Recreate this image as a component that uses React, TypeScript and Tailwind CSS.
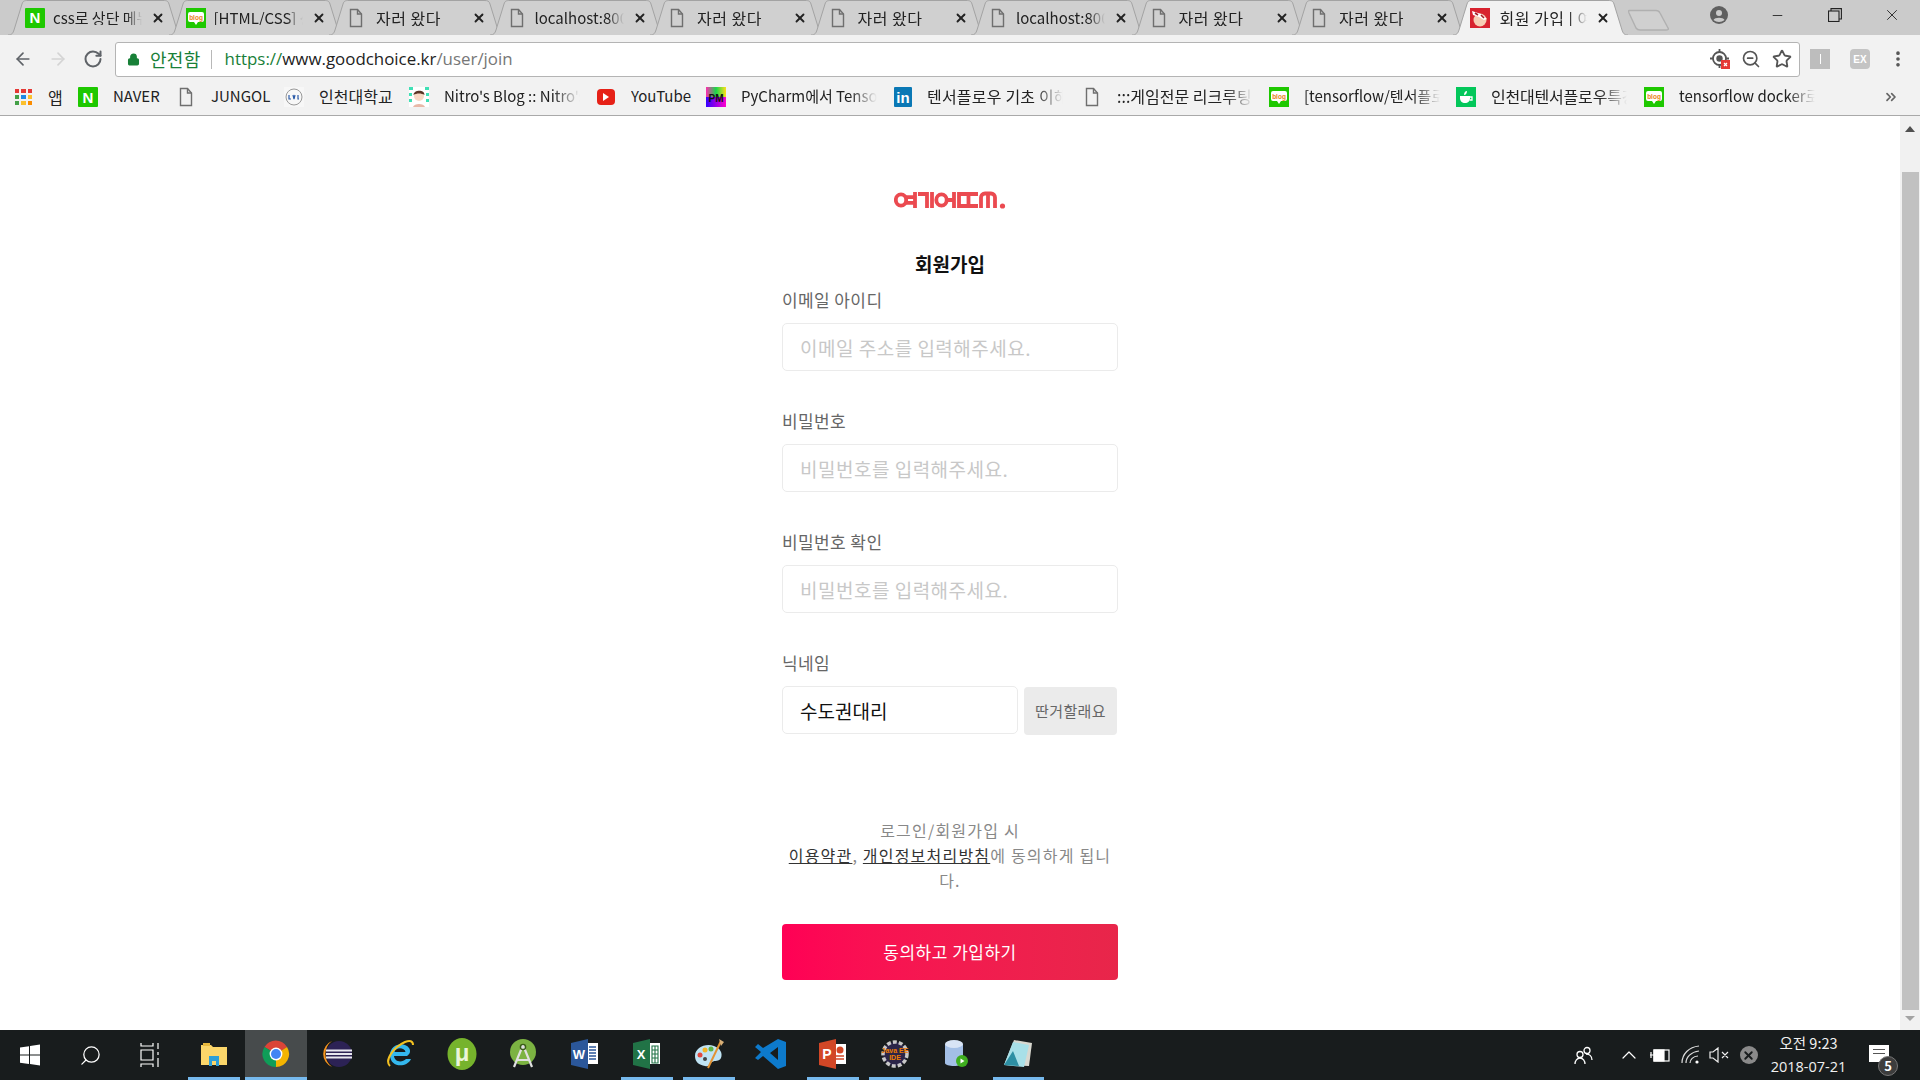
import { ArrowLeft, ArrowRight, RotateCw, Lock, Star, ZoomOut, X, Minus, ChevronUp, MoreVertical, ChevronsRight, Search } from 'lucide-react'

function NaverIcon({ className = 'w-5 h-5' }: { className?: string }) {
  return (
    <div className={`${className} bg-[#1ec800] rounded-[1px] flex items-center justify-center shrink-0 text-white font-black text-[15px] leading-none font-['Liberation_Sans',sans-serif]`}>N</div>
  )
}

function BlogIcon() {
  return (
    <svg viewBox="0 0 20 20" className="w-5 h-5 shrink-0">
      <rect width="20" height="20" fill="#1ec800" />
      <path d="M4 4h12a2 2 0 0 1 2 2v6a2 2 0 0 1-2 2h-4l-2 3-2-3H4a2 2 0 0 1-2-2V6a2 2 0 0 1 2-2z" fill="#fff" />
      <text x="10" y="11.5" textAnchor="middle" fontSize="6.5" fontWeight="700" fill="#e8841a" fontFamily="Liberation Sans">blog</text>
    </svg>
  )
}

function DocIcon() {
  return (
    <svg viewBox="0 0 20 20" className="w-5 h-5 shrink-0" fill="none" stroke="#6f6f6f" strokeWidth="1.4">
      <path d="M4.5 1.5h7l4 4.5v12.5h-11z" />
      <path d="M11.5 1.5V6h4" />
    </svg>
  )
}

function GoodChoiceIcon() {
  return (
    <svg viewBox="0 0 20 20" className="w-5 h-5 shrink-0">
      <rect width="20" height="20" fill="#d8232f" />
      <circle cx="10" cy="12" r="6.5" fill="#f6cdb4" />
      <path d="M2 3l9 3 6 5-3 1-5-3-6-2z" fill="#fff" />
      <path d="M5 5l3 2M11 7l3 3" stroke="#a3202a" strokeWidth="1.6" />
    </svg>
  )
}

const tabs = [
  { label: 'css로 상단 메뉴', icon: <NaverIcon /> },
  { label: '[HTML/CSS] 상단', icon: <BlogIcon /> },
  { label: '자러 왔다', icon: <DocIcon />, kr: true },
  { label: 'localhost:8000', icon: <DocIcon /> },
  { label: '자러 왔다', icon: <DocIcon />, kr: true },
  { label: '자러 왔다', icon: <DocIcon />, kr: true },
  { label: 'localhost:8000', icon: <DocIcon /> },
  { label: '자러 왔다', icon: <DocIcon />, kr: true },
  { label: '자러 왔다', icon: <DocIcon />, kr: true },
  { label: '회원 가입 | 여기어때', icon: <GoodChoiceIcon />, active: true, kr: true },
]

function Tab({ label, icon, active, kr }: { label: string; icon: React.ReactNode; active?: boolean; kr?: boolean }) {
  return (
    <div className={`relative w-[175px] h-[35px] shrink-0 -mr-[14.5px] ${active ? 'z-10' : ''}`}>
      <svg viewBox="0 0 175 35" className="absolute inset-0 w-full h-full">
        <path
          d="M0 35C4 35 5 33 6 30L14 4C15 1 16 .5 20 .5H155C159 .5 160 1 161 4L169 30C170 33 171 35 175 35"
          fill={active ? '#f2f2f2' : '#d0d0d0'}
          stroke="#a3a3a3"
          strokeWidth="1"
        />
      </svg>
      <div className="relative flex items-center h-full pl-[17px]">
        {icon}
        <span
          className={`ml-[8px] w-[89px] overflow-hidden whitespace-nowrap leading-none text-[#222] [mask-image:linear-gradient(to_right,black_82%,transparent)] ${kr ? 'text-[16px] tracking-[0.5px] pl-[2px]' : 'text-[15px]'}`}
        >
          {label}
        </span>
        <X className="w-[14px] h-[14px] ml-[9px] text-[#222]" strokeWidth={3.2} />
      </div>
    </div>
  )
}

function TabStrip() {
  return (
    <div className="h-[35px] bg-[#cbcbcb] flex items-start pl-2 shrink-0 border-b border-[#a3a3a3] box-content -mb-px">
      {tabs.map((t, i) => (
        <Tab key={i} label={t.label} icon={t.icon} active={t.active} kr={t.kr} />
      ))}
      <svg viewBox="0 0 42 22" className="w-[42px] h-[22px] mt-[9px] ml-[14.5px] shrink-0">
        <path d="M1 1.5H28C30 1.5 31 2 32 4L40 19C41 20.5 40 21 38 21H12C10 21 9 20.5 8 19L1 4C.5 2.5.5 1.5 1 1.5z" fill="#d0d0d0" stroke="#b0b0b0" strokeWidth="1.4" />
      </svg>
      <div className="ml-auto flex items-center h-[30px] text-[#222]">
        <div className="w-[42px] flex justify-center mr-[9px]">
          <svg viewBox="0 0 18 18" className="w-[18px] h-[18px]">
            <circle cx="9" cy="9" r="9" fill="#5f5f5f" />
            <circle cx="9" cy="7" r="3" fill="#cbcbcb" />
            <path d="M3.500 14c1-3 10-3 11 0-3 2.500-8 2.500-11 0z" fill="#cbcbcb" />
          </svg>
        </div>
        <div className="w-[57px] flex justify-center"><Minus className="w-[15px] h-[15px]" strokeWidth={1.4} /></div>
        <div className="w-[57px] flex justify-center">
          <svg viewBox="0 0 14 14" className="w-[14px] h-[14px]" fill="none" stroke="#222" strokeWidth="1.1">
            <rect x=".5" y="3" width="10.5" height="10.5" />
            <path d="M3 3V.6h10.4V11H11" />
          </svg>
        </div>
        <div className="w-[57px] flex justify-center"><X className="w-[18px] h-[18px]" strokeWidth={1.2} /></div>
      </div>
    </div>
  )
}

function Toolbar() {
  return (
    <div className="h-[48px] bg-[#f2f2f2] flex items-center shrink-0">
      <div className="flex items-center pl-[13px] w-[115px] gap-[15px] shrink-0">
        <ArrowLeft className="w-5 h-5 text-[#5f6368]" strokeWidth={2} />
        <ArrowRight className="w-5 h-5 text-[#d4d4d4]" strokeWidth={2} />
        <RotateCw className="w-5 h-5 text-[#5f6368]" strokeWidth={2.4} />
      </div>
      <div className="w-[1685px] h-[35px] shrink-0 bg-white border border-[#b4b4b4] rounded-[3px] flex items-center pl-[11px] pr-[7px]">
        <Lock className="w-[13px] h-[15px] text-[#188038]" fill="#188038" strokeWidth={2.4} />
        <span className="ml-[10px] text-[18px] tracking-[0.3px] text-[#188038]">안전함</span>
        <div className="w-px h-[19px] bg-[#b8b8b8] ml-[10px]" />
        <div className="ml-[13px] text-[16.9px] leading-none font-['Open_Sans',sans-serif]">
          <span className="text-[#188038]">https://</span>
          <span className="text-[#222]">www.goodchoice.kr</span>
          <span className="text-[#777]">/user/join</span>
        </div>
        <div className="ml-auto flex items-center gap-[11px]">
          <svg viewBox="0 0 20 20" className="w-5 h-5">
            <circle cx="9.5" cy="9.5" r="6.5" fill="none" stroke="#555" strokeWidth="1.8" />
            <circle cx="9.5" cy="9.5" r="3.2" fill="#555" />
            <path d="M9.5 0v3M9.5 16v3M0 9.5h3M16 9.5h3" stroke="#555" strokeWidth="1.8" />
            <rect x="11" y="11" width="9" height="9" fill="#e53935" />
            <path d="M14 14l3 3M17 14l-3 3" stroke="#fff" strokeWidth="1.2" />
          </svg>
          <ZoomOut className="w-[20px] h-[20px] text-[#555]" strokeWidth={2} />
          <Star className="w-[20px] h-[20px] text-[#555]" strokeWidth={2.2} />
        </div>
      </div>
      <div className="w-5 h-5 bg-[#bdbdbd] ml-[10px] flex items-center justify-center shrink-0">
        <div className="w-px h-[10px] bg-white" />
      </div>
      <div className="w-5 h-5 bg-[#c4c4c4] rounded-[4px] ml-[20px] shrink-0 flex items-center justify-center text-white text-[10px] font-bold font-['Liberation_Sans',sans-serif]">EX</div>
      <MoreVertical className="w-5 h-5 ml-[18px] text-[#555] shrink-0" strokeWidth={2.4} />
    </div>
  )
}

function AppsIcon() {
  const colors = ['#e53935', '#e53935', '#e53935', '#43a047', '#1e88e5', '#fbc02d', '#43a047', '#fbc02d', '#fb8c00']
  return (
    <div className="grid grid-cols-3 gap-[2px] w-[17px] h-[17px]">
      {colors.map((c, i) => (
        <div key={i} className="w-[4.3px] h-[4.3px]" style={{ backgroundColor: c }} />
      ))}
    </div>
  )
}

const UniIcon = (
  <svg viewBox="0 0 20 20" className="w-5 h-5 shrink-0">
    <rect width="20" height="20" fill="#f7f7f7" />
    <circle cx="10" cy="10" r="8" fill="none" stroke="#999" />
    <path d="M5 8v4h2M9 8l1 4 1-4M14 8v4h1" fill="none" stroke="#2a5aa8" strokeWidth="1.2" />
  </svg>
)

const NitroIcon = (
  <svg viewBox="0 0 20 20" className="w-5 h-5 shrink-0">
    <rect width="20" height="20" fill="#fff" />
    <path d="M0 0h4v3H0zM16 0h4v3h-4zM0 6h3v3H0zM17 6h3v3h-3zM0 12h3v3H0zM17 12h3v3h-3z" fill="#3fe0b5" />
    <circle cx="10" cy="9" r="5" fill="#f8d8c4" />
    <path d="M4.500 8c0-5 11-6 11 0-3-2-8-2-11 0z" fill="#5b3526" />
    <path d="M4 20c1-4 11-4 12 0z" fill="#e8b8a8" />
  </svg>
)

const YoutubeIcon = (
  <div className="w-5 h-5 flex items-center justify-center shrink-0">
    <div className="w-[18px] h-[16px] bg-[#e62117] rounded-[4px] flex items-center justify-center">
      <div className="w-0 h-0 border-y-[4px] border-y-transparent border-l-[6px] border-l-white" />
    </div>
  </div>
)

const PmIcon = (
  <svg viewBox="0 0 20 20" className="w-5 h-5 shrink-0">
    <defs>
      <linearGradient id="pm" x1="0" y1="0" x2="1" y2="0">
        <stop offset="0" stopColor="#ff2bb0" />
        <stop offset=".5" stopColor="#19d64b" />
        <stop offset="1" stopColor="#ffe01a" />
      </linearGradient>
      <linearGradient id="pm2" x1="0" y1="0" x2="1" y2="0">
        <stop offset="0" stopColor="#30f" />
        <stop offset="1" stopColor="#f0c" />
      </linearGradient>
    </defs>
    <rect width="20" height="10" fill="url(#pm)" />
    <rect y="10" width="20" height="10" fill="url(#pm2)" />
    <text x="10" y="14.500" textAnchor="middle" fontSize="10" fontWeight="700" fill="#111" fontFamily="Liberation Sans">PM</text>
  </svg>
)

const LinkedinIcon = (
  <div className="w-[18px] h-5 bg-[#0a78b5] rounded-[1px] flex items-center justify-center text-white font-bold text-[15px] leading-none shrink-0 font-['Liberation_Sans',sans-serif]">in</div>
)

const CupIcon = (
  <svg viewBox="0 0 20 20" className="w-5 h-5 shrink-0">
    <rect width="20" height="20" fill="#03c75a" />
    <path d="M4 9h10v2c0 3-2 5-5 5s-5-2-5-5z" fill="#fff" />
    <path d="M14 10h2v3h-2.500" fill="none" stroke="#fff" strokeWidth="1.3" />
    <path d="M8 8c0-2 1-4 3-4 0 2-1 4-3 4z" fill="#fff" />
  </svg>
)

const bookmarks = [
  { icon: <NaverIcon />, label: 'NAVER', w: 'w-[98px]', tw: 'w-[60px]' },
  { icon: <DocIcon />, label: 'JUNGOL', w: 'w-[108px]', tw: 'w-[70px]' },
  { icon: UniIcon, label: '인천대학교', w: 'w-[125px]', tw: 'w-[85px] text-[16px] -translate-y-px' },
  { icon: NitroIcon, label: "Nitro's Blog :: Nitro's", w: 'w-[187px]', tw: 'w-[136px]', fade: true },
  { icon: YoutubeIcon, label: 'YouTube', w: 'w-[110px]', tw: 'w-[75px]' },
  { icon: PmIcon, label: 'PyCharm에서 Tensorflow', w: 'w-[188px]', tw: 'w-[136px]', fade: true },
  { icon: LinkedinIcon, label: '텐서플로우 기초 이해하기', w: 'w-[188px]', tw: 'w-[136px] text-[16px] tracking-[0.2px] -translate-y-px', fade: true },
  { icon: <DocIcon />, label: ':::게임전문 리크루팅 사이트', w: 'w-[187px]', tw: 'w-[136px] text-[16px] -translate-y-px', fade: true },
  { icon: <BlogIcon />, label: '[tensorflow/텐서플로우]', w: 'w-[187px]', tw: 'w-[136px]', fade: true },
  { icon: CupIcon, label: '인천대텐서플로우특강 모임', w: 'w-[188px]', tw: 'w-[136px] text-[16px] tracking-[-0.2px] -translate-y-px', fade: true },
  { icon: <BlogIcon />, label: 'tensorflow docker로 설치', w: 'w-[187px]', tw: 'w-[136px]', fade: true },
]

function BookmarkBar() {
  return (
    <div className="h-[33px] bg-[#f2f2f2] border-b border-[#a9a9a9] flex items-center pl-[15px] pb-[4px] shrink-0 text-[15px] text-[#222]">
      <AppsIcon />
      <span className="ml-4 w-[30px] -mt-[1px] text-[16px]">앱</span>
      {bookmarks.map((b, i) => (
        <div key={i} className={`flex items-center shrink-0 ${b.w}`}>
          {b.icon}
          <span className={`ml-[15px] -mt-[1px] overflow-hidden whitespace-nowrap ${b.tw} ${b.fade ? '[mask-image:linear-gradient(to_right,black_80%,transparent)]' : ''}`}>
            {b.label}
          </span>
        </div>
      ))}
      <ChevronsRight className="w-4 h-4 ml-[52px] text-[#666] shrink-0" strokeWidth={2.6} />
    </div>
  )
}

function Scrollbar() {
  return (
    <div className="w-5 bg-[#f1f1f1] flex flex-col items-center shrink-0">
      <div className="h-[56px] pt-[10px] w-full flex justify-center">
        <div className="w-0 h-0 border-x-[5px] border-x-transparent border-b-[6px] border-b-[#505050]" />
      </div>
      <div className="w-[17px] h-[838px] bg-[#c1c1c1]" />
      <div className="mt-[6px] w-0 h-0 border-x-[5px] border-x-transparent border-t-[5px] border-t-[#a3a3a3]" />
    </div>
  )
}

function Logo() {
  return (
    <svg viewBox="0 0 112 18" className="w-[112px] h-[18px] mx-auto block" fill="none" stroke="#eb4a50" strokeWidth="3.8">
      <ellipse cx="7" cy="9" rx="5.200" ry="5.600" />
      <path d="M12 6.200h8M12 11.800h8M21 1v16" />
      <path d="M24 3h9V17" />
      <path d="M38 1v16" />
      <ellipse cx="47.500" cy="9" rx="5.200" ry="5.600" />
      <path d="M52 9h7M60 1v16" />
      <path d="M65 3H84M65 15H84M65 1.100V16.900M74.500 3V15" />
      <path d="M87 17V6.500a4 4 0 0 1 4-4h6a4 4 0 0 1 4 4V17M94 3V17" />
      <circle cx="108.500" cy="15" r="2.600" fill="#eb4a50" stroke="none" />
    </svg>
  )
}

function Field({ label, placeholder, mt }: { label: string; placeholder: string; mt: string }) {
  return (
    <div className={mt}>
      <label className="block text-[17px] leading-6 tracking-[0.4px] text-[#666]">{label}</label>
      <input
        placeholder={placeholder}
        className="mt-[11px] block w-full h-[48px] px-[17px] border border-[#ebebeb] rounded-[5px] text-[19px] tracking-[0.5px] outline-none placeholder:text-[#c8c8c8]"
      />
    </div>
  )
}

function JoinForm() {
  return (
    <div className="flex-1 bg-white overflow-hidden">
      <div className="w-[336px] mx-auto pt-[75px]">
        <Logo />
        <h1 className="mt-[41px] text-center text-[19px] leading-7 font-semibold text-[#111]">회원가입</h1>
        <Field mt="mt-[10px]" label="이메일 아이디" placeholder="이메일 주소를 입력해주세요." />
        <Field mt="mt-[38px]" label="비밀번호" placeholder="비밀번호를 입력해주세요." />
        <Field mt="mt-[38px]" label="비밀번호 확인" placeholder="비밀번호를 입력해주세요." />
        <div className="mt-[38px]">
          <label className="block text-[17px] leading-6 tracking-[0.4px] text-[#666]">닉네임</label>
          <div className="mt-[11px] flex items-start gap-[6px]">
            <input
              defaultValue="수도권대리"
              className="w-[236px] h-[48px] px-[17px] border border-[#ebebeb] rounded-[5px] text-[19px] text-[#111] outline-none"
            />
            <button className="w-[93px] h-[48px] mt-[1px] bg-[#ebebeb] rounded-[4px] text-[15px] tracking-[0.4px] text-[#666]">
              딴거할래요
            </button>
          </div>
        </div>
        <p className="mt-[83px] px-1 text-center text-[16px] leading-[25px] tracking-[1.2px] text-[#888]">
          로그인/회원가입 시<br />
          <a className="underline text-[#333]">이용약관</a>, <a className="underline text-[#333]">개인정보처리방침</a>에 동의하게 됩니다.
        </p>
        <button className="mt-[31px] w-full h-[56px] rounded-[4px] bg-gradient-to-r from-[#ff0055] to-[#e8264a] text-white text-[17px] tracking-[0.5px]">
          동의하고 가입하기
        </button>
      </div>
    </div>
  )
}

const taskIcons: { node: React.ReactNode; bar?: boolean; active?: boolean }[] = [
  {
    bar: true,
    node: (
      <svg viewBox="0 0 28 28" className="w-7 h-7">
        <path d="M1 5h10l2 2h14v18H1z" fill="#fbd66a" />
        <path d="M3 3h7v3H3z" fill="#e8b93d" />
        <path d="M9 16h10v10h-3v-5h-4v5H9z" fill="#2d9fd8" />
      </svg>
    ),
  },
  {
    bar: true,
    active: true,
    node: (
      <svg viewBox="0 0 28 28" className="w-7 h-7">
        <path d="M14 14L2.500 7A13 13 0 0 1 25 7z" fill="#db4437" />
        <path d="M14 14L25 7a13 13 0 0 1-11 20z" fill="#f4b400" />
        <path d="M14 14l0 13A13 13 0 0 1 2.500 7z" fill="#0f9d58" />
        <circle cx="14" cy="14" r="6.400" fill="#fff" />
        <circle cx="14" cy="14" r="5" fill="#4285f4" />
      </svg>
    ),
  },
  {
    node: (
      <svg viewBox="0 0 30 30" className="w-[30px] h-[30px]">
        <path d="M9 2a14 14 0 0 0 0 26A16 16 0 0 1 9 2z" fill="#f7941e" />
        <circle cx="16" cy="15" r="13" fill="#2c2255" />
        <path d="M3 11.500h26M3 15h26M3 18.500h26" stroke="#e8e8f0" strokeWidth="2" />
      </svg>
    ),
  },
  {
    node: (
      <svg viewBox="0 0 30 30" className="w-[30px] h-[30px]">
        <path d="M22 17H9c.5 6 8 7 12 3h5c-4 9-21 9-21-4 0-11 14-14 19-7 2 3 1 6-2 8zM9.500 13h11c-1-5-10-5-11 0z" fill="#34b8ee" />
        <path d="M5 27C-1 21 9 8 20 3c5-2 8-1 8 3" fill="none" stroke="#f4c221" strokeWidth="2" />
      </svg>
    ),
  },
  {
    node: (
      <svg viewBox="0 0 30 32" className="w-[30px] h-8">
        <ellipse cx="15" cy="16" rx="14.500" ry="16" fill="#76b32c" />
        <text x="15" y="23" textAnchor="middle" fontSize="24" fontWeight="700" fill="#eaf5d8" fontFamily="Liberation Sans">μ</text>
      </svg>
    ),
  },
  {
    node: (
      <svg viewBox="0 0 30 32" className="w-[30px] h-8">
        <circle cx="15" cy="14" r="13" fill="#7cb342" />
        <path d="M15 7L6 29M15 7l9 22M9 22h12" stroke="#e0e0e0" strokeWidth="2.200" fill="none" />
        <circle cx="15" cy="9" r="2.600" fill="none" stroke="#3b5d1a" strokeWidth="1.400" />
      </svg>
    ),
  },
  {
    node: (
      <svg viewBox="0 0 28 32" className="w-7 h-8">
        <path d="M16 5h11v21H16z" fill="#fff" />
        <path d="M18 9h7M18 12h7M18 15h7M18 18h7M18 21h7" stroke="#2b579a" strokeWidth="1.400" />
        <path d="M0 5l17-4v30L0 27z" fill="#2b579a" />
        <text x="8" y="21" textAnchor="middle" fontSize="13" fontWeight="700" fill="#fff" fontFamily="Liberation Sans">W</text>
      </svg>
    ),
  },
  {
    bar: true,
    node: (
      <svg viewBox="0 0 28 32" className="w-7 h-8">
        <path d="M16 5h11v21H16z" fill="#fff" />
        <path d="M19 8h6v17h-6zM19 12h6M19 16h6M19 20h6M22 8v17" stroke="#217346" strokeWidth="1.100" fill="none" />
        <path d="M0 5l17-4v30L0 27z" fill="#217346" />
        <text x="8" y="21" textAnchor="middle" fontSize="13" fontWeight="700" fill="#fff" fontFamily="Liberation Sans">X</text>
      </svg>
    ),
  },
  {
    bar: true,
    node: (
      <svg viewBox="0 0 32 32" className="w-8 h-8">
        <path d="M2 18C2 10 12 5 21 8c6 2 9 7 7 12-2 4-6 2-9 4-3 2-2 5-7 4C6 27 2 24 2 18z" fill="#bfe3f3" />
        <circle cx="7" cy="17" r="2.500" fill="#e2483d" />
        <circle cx="12" cy="12" r="2.500" fill="#f3b52a" />
        <circle cx="18" cy="11" r="2.500" fill="#5db445" />
        <circle cx="12" cy="21" r="2" fill="#444" />
        <path d="M28 3L15 30" stroke="#e29333" strokeWidth="2" />
        <path d="M26 1l5 3-3 4z" fill="#d8b078" />
      </svg>
    ),
  },
  {
    node: (
      <svg viewBox="0 0 32 32" className="w-8 h-8">
        <path d="M23 1l8 3v24l-8 3L8 18l-5 4-3-2 6-6-6-5 3-3 5 4zM23 9l-8 6 8 7z" fill="#0d7acc" fillRule="evenodd" />
      </svg>
    ),
  },
  {
    bar: true,
    node: (
      <svg viewBox="0 0 28 32" className="w-7 h-8">
        <path d="M14 6h13v20H14z" fill="#fff" />
        <path d="M17 18h8M17 21h8" stroke="#d24726" strokeWidth="1.400" />
        <circle cx="21" cy="12" r="3.500" fill="#d24726" />
        <path d="M0 5l17-4v30L0 27z" fill="#d24726" />
        <text x="8" y="21" textAnchor="middle" fontSize="14" fontWeight="700" fill="#fff" fontFamily="Liberation Sans">P</text>
      </svg>
    ),
  },
  {
    bar: true,
    node: (
      <svg viewBox="0 0 30 30" className="w-[30px] h-[30px]">
        <circle cx="15" cy="15" r="12" fill="#2b2548" stroke="#c8c8c8" strokeWidth="3.500" strokeDasharray="4 2" />
        <text x="15" y="13.500" textAnchor="middle" fontSize="7" fontWeight="700" fill="#f07d00" fontFamily="Liberation Sans">Java EE</text>
        <text x="15" y="21" textAnchor="middle" fontSize="7" fontWeight="700" fill="#f07d00" fontFamily="Liberation Sans">IDE</text>
      </svg>
    ),
  },
  {
    node: (
      <svg viewBox="0 0 26 30" className="w-[26px] h-[30px]">
        <path d="M1 5v19c0 4 18 4 18 0V5z" fill="#a3bfe6" />
        <ellipse cx="10" cy="5" rx="9" ry="4" fill="#d8e4f5" />
        <circle cx="18" cy="22" r="6" fill="#3fae20" />
        <path d="M16.500 19.500v5l4-2.500z" fill="#fff" />
      </svg>
    ),
  },
  {
    bar: true,
    node: (
      <svg viewBox="0 0 30 30" className="w-[30px] h-[30px]">
        <path d="M10 1l18 3-3 23-25-1z" fill="#d8d8d0" />
        <path d="M9 3l16 3-5 22-20-2z" fill="#a8e0e8" />
        <path d="M0 26L9 12l6 15z" fill="#2d8fa3" />
      </svg>
    ),
  },
]

function Taskbar() {
  return (
    <div className="h-[50px] bg-[#181c1d] flex items-stretch shrink-0 text-white">
      <div className="w-[60px] shrink-0 flex items-center justify-center">
        <svg viewBox="0 0 20 22" className="w-5 h-[22px]" fill="#fff">
          <path d="M0 3.500l9-1.300V10.500H0zM10 2l10-1.500V10.500H10zM0 11.500h9v8.500l-9-1.300zM10 11.500h10v10L10 20z" />
        </svg>
      </div>
      <div className="w-[60px] shrink-0 flex items-center justify-center">
        <Search className="w-[23px] h-[23px] -scale-x-100" strokeWidth={1.3} />
      </div>
      <div className="w-[63px] pr-[3px] shrink-0 flex items-center justify-center">
        <svg viewBox="0 0 20 26" className="w-5 h-[26px]" fill="none" stroke="#fff" strokeWidth="1.2">
          <path d="M1 1v3h12V1M1 25v-3h12v3M1 8h12v10H1zM18 1v6M18 10v3M18 16v9" />
        </svg>
      </div>
      {taskIcons.map((t, i) => (
        <div
          key={i}
          className={`relative w-[61.9px] shrink-0 flex items-center justify-center pb-[2px] ${t.active ? 'bg-[#474b4c]' : ''}`}
        >
          {t.node}
          {t.bar && (
            <div className={`absolute bottom-0 h-[3px] bg-[#76b9ed] ${t.active ? 'inset-x-0' : 'inset-x-[5px]'}`} />
          )}
        </div>
      ))}
      <div className="ml-auto flex items-center text-[15px]">
        <svg viewBox="0 0 20 20" className="w-[20px] h-[20px] mr-[23px]" fill="none" stroke="#fff" strokeWidth="1.3">
          <circle cx="13" cy="5.500" r="3" />
          <circle cx="6" cy="9.500" r="3" />
          <path d="M1 19c0-3 2-6 5-6s5 3 5 6M12 9c3 0 6 2 6 6" />
        </svg>
        <ChevronUp className="w-6 h-6 mr-[9px]" strokeWidth={1.2} />
        <svg viewBox="0 0 20 13" className="w-5 h-[13px] mr-[11px]" fill="none" stroke="#fff" strokeWidth="1.2">
          <rect x="4" y="1" width="15" height="11" />
          <rect x="4" y="1" width="10" height="11" fill="#fff" />
          <path d="M0 6h4M1 3v6" />
        </svg>
        <svg viewBox="0 0 20 20" className="w-5 h-5 mr-[7.500px]" fill="none" stroke="#ddd" strokeWidth="1.2">
          <path d="M1 18C1 9 8 2 18 1M5 18c0-6 5-11 13-12M9 18c0-3 3-7 8-7" />
          <circle cx="16" cy="17" r="1.600" fill="#fff" stroke="none" />
        </svg>
        <svg viewBox="0 0 20 16" className="w-5 h-4 mr-[11px]" fill="none" stroke="#eee" strokeWidth="1.2">
          <path d="M1 5v6h3l5 4V1L4 5zM13 5l6 6M19 5l-6 6" />
        </svg>
        <div className="w-[18px] h-[18px] rounded-full bg-[#8a8a8a] flex items-center justify-center mr-[13px]">
          <X className="w-[13px] h-[13px] text-[#181c1d]" strokeWidth={3.5} />
        </div>
        <div className="w-[76px] text-center leading-[24px] text-[#f0f0f0] whitespace-nowrap text-[14.5px]">
          <div>오전 9:23</div>
          <div className="font-['Open_Sans',sans-serif]">2018-07-21</div>
        </div>
        <div className="relative w-5 h-[17px] ml-[22.500px] mr-[31px] -mt-[3px] bg-white">
          <div className="absolute left-[4px] top-[4px] w-3 h-[5px] border-y border-[#555]" />
          <div className="absolute left-[9px] top-[11px] w-[20px] h-[20px] rounded-full bg-[#3d3d3d] border border-[#777] flex items-center justify-center text-[13px] font-bold text-white">5</div>
        </div>
      </div>
    </div>
  )
}

export default function App() {
  return (
    <div className="w-[1920px] h-[1080px] flex flex-col overflow-hidden bg-white font-['Noto_Sans_CJK_KR','Open_Sans',sans-serif]">
      <TabStrip />
      <Toolbar />
      <BookmarkBar />
      <div className="flex-1 flex min-h-0">
        <JoinForm />
        <Scrollbar />
      </div>
      <Taskbar />
    </div>
  )
}
